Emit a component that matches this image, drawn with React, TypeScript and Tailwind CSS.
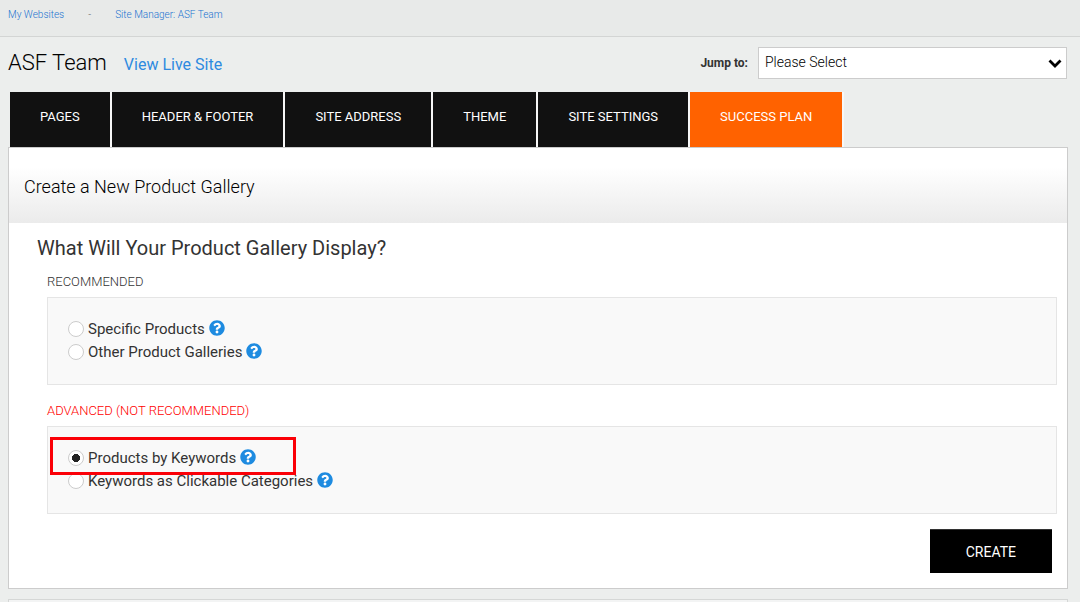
import { useState } from "react"
import { FaQuestionCircle } from "react-icons/fa"

const TABS: { label: string; active?: boolean }[] = [
  { label: "PAGES" },
  { label: "HEADER & FOOTER" },
  { label: "SITE ADDRESS" },
  { label: "THEME" },
  { label: "SITE SETTINGS" },
  { label: "SUCCESS PLAN", active: true },
]

const RECOMMENDED = [
  { value: "specific", label: "Specific Products" },
  { value: "galleries", label: "Other Product Galleries" },
]

const ADVANCED = [
  { value: "keywords", label: "Products by Keywords", highlight: true },
  { value: "categories", label: "Keywords as Clickable Categories" },
]

interface OptionProps {
  value: string
  label: string
  checked: boolean
  highlight?: boolean
  onSelect: (value: string) => void
}

function Option({ value, label, checked, highlight, onSelect }: OptionProps) {
  return (
    <div className="relative flex h-[23px] w-fit items-center gap-1">
      <input
        id={value}
        type="radio"
        name="display"
        value={value}
        checked={checked}
        onChange={() => onSelect(value)}
        className="size-4 appearance-none rounded-full border border-[#ccc] bg-white bg-[radial-gradient(circle,#222_0_4px,transparent_4px)] not-checked:bg-none"
      />
      <label htmlFor={value} className="pt-0.5">{label}</label>
      <button type="button" aria-label={`Help: ${label}`} className="mb-0.5 rounded-full bg-white text-[#1e8be0]">
        <FaQuestionCircle size={16} />
      </button>
      {highlight && (
        <div className="pointer-events-none absolute -top-[9px] -left-[18px] z-10 h-[38px] w-[246px] border-3 border-[#fb0007]" />
      )}
    </div>
  )
}

// ── Bordered box with its legend ──────────────────────────────
function OptionGroup({ title, titleClass, children }: { title: string; titleClass: string; children: React.ReactNode }) {
  return (
    <fieldset className="mr-2.5 ml-[38px]">
      <legend className={`flex h-[26px] items-end pb-[5px] text-[13px] leading-5 font-light ${titleClass}`}>{title}</legend>
      <div className="border border-[#e5e5e5] bg-[#f9f9f9] px-5 pt-[19px] pb-[21px]">{children}</div>
    </fieldset>
  )
}

export default function App() {
  const [selected, setSelected] = useState("keywords")

  return (
    <div className="flex min-h-screen flex-col bg-[#eceeed] font-[Roboto,sans-serif] text-[15px] text-[#333]">
      <nav className="flex h-[37px] items-start border-b border-[#d3d5d4] bg-[#e8eae9] px-2 pt-2 text-[10px] leading-[14px] font-light text-[#1a73d0]">
        <a href="#">My Websites</a>
        <span className="w-[51px] text-center text-[#666]">-</span>
        <a href="#">Site Manager: ASF Team</a>
      </nav>

      <main className="flex grow flex-col pr-3 pl-2">
        <header className="flex h-[55px] items-center justify-between pr-px pb-1">
          <div className="flex items-baseline gap-[17px]">
            <h1 className="text-[22px] leading-7 font-light text-black">ASF Team</h1>
            <a href="#" className="text-base text-[#2e8ae0]">View Live Site</a>
          </div>
          <div className="flex items-center gap-2.5">
            <label htmlFor="jump" className="text-xs font-bold">Jump to:</label>
            <div className="relative">
              <select
                id="jump"
                className="block h-8 w-[309px] appearance-none border border-[#ccc] bg-white px-1.5 pb-0.5 text-sm font-light text-black"
              >
                <option>Please Select</option>
              </select>
              <svg viewBox="0 0 14 9" className="pointer-events-none absolute top-3 right-[5px] h-[9px] w-3.5">
                <path d="M1.5 1.5 7 7 12.5 1.5" fill="none" stroke="#000" strokeWidth="2.8" />
              </svg>
            </div>
          </div>
        </header>

        <nav className="flex pl-0.5 text-[13px] leading-5 text-white">
          {TABS.map((tab) => (
            <a
              key={tab.label}
              href="#"
              className={`h-[55px] border-r-2 border-[#f7f7f7] px-[30px] pt-[15px] ${tab.active ? "bg-[#ff6200]" : "bg-[#111]"}`}
            >
              {tab.label}
            </a>
          ))}
        </nav>

        <form className="border border-[#ccc] bg-white pb-[15px]" onSubmit={(e) => e.preventDefault()}>
          <div className="flex h-[75px] items-center bg-linear-to-b from-white from-25% to-[#ebebeb] px-[15px] pt-0.5">
            <h2 className="text-lg font-light text-black">Create a New Product Gallery</h2>
          </div>

          <h3 className="ml-7 pt-2.5 text-xl leading-[30px]">What Will Your Product Gallery Display?</h3>

          <div className="mt-2 flex flex-col gap-[15px]">
            <OptionGroup title="RECOMMENDED" titleClass="text-[#333]">
              {RECOMMENDED.map((o) => (
                <Option key={o.value} {...o} checked={selected === o.value} onSelect={setSelected} />
              ))}
            </OptionGroup>
            <OptionGroup title="ADVANCED (NOT RECOMMENDED)" titleClass="text-[#f00]">
              {ADVANCED.map((o) => (
                <Option key={o.value} {...o} checked={selected === o.value} onSelect={setSelected} />
              ))}
            </OptionGroup>
          </div>

          <div className="mt-[15px] flex justify-end pr-[15px]">
            <button type="submit" className="h-11 border-t border-[#333] bg-black px-9 text-sm text-white">
              CREATE
            </button>
          </div>
        </form>

        <section className="mt-2.5 grow border border-b-0 border-[#d5d7d6] bg-[#f3f4f4]" />
      </main>
    </div>
  )
}
